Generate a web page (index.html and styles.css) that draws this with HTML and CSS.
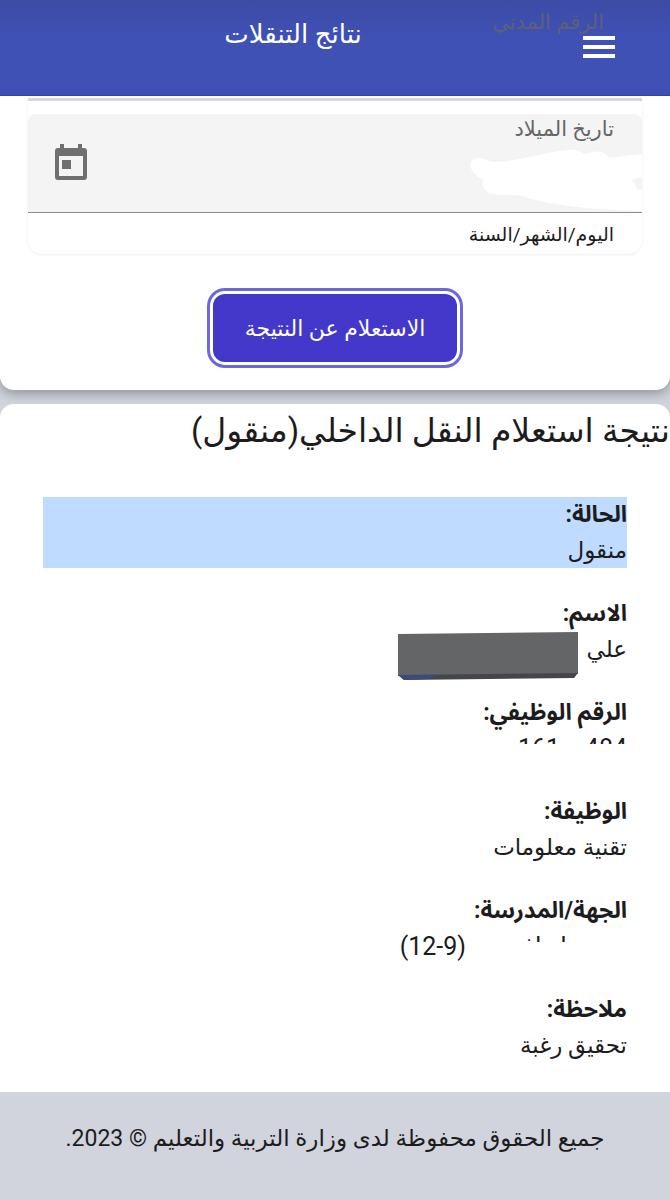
FILE: index.html
```html
<!DOCTYPE html>
<html lang="ar" dir="rtl">
<head>
    <meta charset="UTF-8">
    <meta name="viewport" content="width=device-width, initial-scale=1.0">
    <title>نتائج التنقلات</title>
    <link rel="stylesheet" href="styles.css">
</head>
<body>
    <header class="toolbar">
        <button type="button" class="menu-button" aria-label="القائمة">
            <svg width="32" height="22" viewBox="0 0 32 22" fill="#fff">
                <rect width="32" height="4"/>
                <rect y="9" width="32" height="4"/>
                <rect y="18" width="32" height="4"/>
            </svg>
        </button>
        <h1>نتائج التنقلات</h1>
        <span class="floating-label">الرقم المدني</span>
    </header>
    <main>
        <form class="card search-card">
            <div class="field-box">
                <div class="field">
                    <label for="birthDate">تاريخ الميلاد</label>
                    <div class="field-row">
                        <input type="text" id="birthDate" name="birthDate">
                        <button type="button" class="date-button" aria-label="التقويم">
                            <svg width="32" height="36" viewBox="0 0 32 36">
                                <path fill="#6f6f6f" fill-rule="evenodd" d="M5 0h4v4h14V0h4v4h2a3 3 0 0 1 3 3v26a3 3 0 0 1-3 3H3a3 3 0 0 1-3-3V7a3 3 0 0 1 3-3h2zM4 12v20h24V12zM7 16h9v9H7z"/>
                            </svg>
                        </button>
                    </div>
                    <svg class="brush" width="172" height="62" viewBox="0 0 172 62" fill="#fff">
                        <path d="M9 8C16 8 18 12 24 12C48 12 72 2 99 0C106-1 110 2 115 4C124 1 134-1 139 8C151 6 162 5 172 4V27C168 28 164 29 161 30C165 33 166 36 167 39L172 40V61C136 59 90 59 49 45C37 44 24 47 16 41C12 37 12 33 14 29C3 27-4 14 4 9Z"/>
                    </svg>
                </div>
                <p class="hint">اليوم/الشهر/السنة</p>
            </div>
            <button type="submit" class="submit-button">الاستعلام عن النتيجة</button>
        </form>
        <section class="card result-card">
            <h2>نتيجة استعلام النقل الداخلي(منقول)</h2>
            <dl class="details">
                <div class="detail selected">
                    <dt>الحالة:</dt>
                    <dd>منقول</dd>
                </div>
                <div class="detail">
                    <dt>الاسم:</dt>
                    <dd class="name">علي
                        <svg class="name-cover" width="180" height="50" viewBox="0 0 180 50">
                            <path fill="#646567" d="M0 3L180 1V43L0 45Z"/>
                            <path fill="#44464c" d="M0 44L180 42L176 47L6 49Z"/>
                            <path fill="#3d4a80" d="M0 44L40 44L30 48L6 49Z"/>
                        </svg>
                    </dd>
                </div>
                <div class="detail">
                    <dt>الرقم الوظيفي:</dt>
                    <dd><span class="cut" dir="ltr">161 &nbsp; &nbsp;484</span></dd>
                </div>
                <div class="detail">
                    <dt>الوظيفة:</dt>
                    <dd>تقنية معلومات</dd>
                </div>
                <div class="detail">
                    <dt>الجهة/المدرسة:</dt>
                    <dd class="school"><span class="cut cut-school">ا رافعي</span><span class="grades">(12-9)</span></dd>
                </div>
                <div class="detail">
                    <dt>ملاحظة:</dt>
                    <dd>تحقيق رغبة</dd>
                </div>
            </dl>
        </section>
    </main>
    <footer>
        <p>جميع الحقوق محفوظة لدى وزارة التربية والتعليم © 2023.</p>
    </footer>
</body>
</html>
```
FILE: styles.css
```css
* {
    box-sizing: border-box;
}
body {
    margin: 0;
    font-family: Roboto, "DejaVu Sans", sans-serif;
    font-size: 23px;
    line-height: 36px;
    color: #1c1c1e;
    background-color: #d1d4dc;
}
h1, h2, p, dl, dd {
    margin: 0;
}
button {
    font-family: inherit;
    border: none;
    cursor: pointer;
}
.toolbar {
    position: relative;
    display: flex;
    align-items: flex-start;
    height: 96px;
    padding: 16px 55px;
    color: #fff;
    background: linear-gradient(#3c4ba5, #3f51b5 40%);
    border-bottom: 1px solid #36469f;
}
.menu-button {
    display: flex;
    padding: 20px 0;
    background: none;
}
.toolbar h1 {
    flex: 1;
    padding-right: 52px;
    text-align: center;
    font-size: 26px;
    font-weight: normal;
}
/* label of the field that scrolled under the toolbar */
.floating-label {
    position: absolute;
    top: 4px;
    right: 66px;
    font-size: 21px;
    color: #5d6079;
}
.card {
    background-color: #fff;
}
.search-card {
    padding: 2px 28px 28px;
    text-align: center;
    border-radius: 0 0 14px 14px;
    box-shadow: 0 4px 12px rgba(0, 0, 0, 0.3);
}
.field-box {
    padding-top: 13px;
    text-align: right;
    border-top: 3px solid #d4d7dc;
    border-radius: 0 0 14px 14px;
    box-shadow: 0 1px 3px rgba(0, 0, 0, 0.08);
}
.field {
    position: relative;
    height: 99px;
    padding: 0 28px 0 27px;
    background-color: #f4f4f4;
    border-bottom: 1px solid #8c8c8c;
    border-radius: 8px 8px 0 0;
}
.field label {
    display: block;
    font-size: 21px;
    line-height: 30px;
    color: #666;
}
.field-row {
    display: flex;
    align-items: flex-start;
}
.field-row input {
    flex: 1;
    min-width: 0;
    height: 48px;
    font-size: 23px;
    background: none;
    border: none;
    outline: none;
}
.date-button {
    display: flex;
    padding: 0;
    background: none;
}
.brush {
    position: absolute;
    right: 0;
    bottom: 0;
}
.hint {
    padding: 6px 28px 3px;
    font-size: 19px;
    line-height: 32px;
}
.submit-button {
    margin-top: 40px;
    padding: 16px 32px 14px;
    font-size: 22px;
    line-height: 38px;
    color: #fff;
    background-color: #4338ca;
    border-radius: 12px;
    box-shadow: 0 0 0 3px #fff, 0 0 0 6px #6a68db;
}
.result-card {
    margin-top: 14px;
    padding-bottom: 29px;
    border-radius: 14px 14px 0 0;
}
.result-card h2 {
    height: 50px;
    overflow: hidden;
    font-size: 33px;
    font-weight: normal;
    line-height: 54px;
    white-space: nowrap;
}
.details {
    display: flex;
    flex-direction: column;
    gap: 28px;
    padding: 43px 43px 0;
}
.detail.selected {
    background-color: #bfdbff;
}
dt {
    font-family: Roboto, "Noto Sans Arabic", "Noto Sans", sans-serif;
    font-weight: bold;
}
dd {
    height: 35px;
}
.name {
    display: flex;
    align-items: flex-start;
    gap: 8px;
}
.name-cover {
    flex: none;
    margin: -1px 0 -13px;
}
/* only the top edge of the erased text is left */
.cut {
    display: block;
    height: 13px;
    overflow: hidden;
    font-size: 25px;
    text-align: right;
}
.school {
    display: flex;
}
.cut-school {
    width: 161px;
    padding-right: 60px;
}
.grades {
    font-size: 25px;
}
footer {
    padding: 29px 60px 43px;
    text-align: center;
}
```
